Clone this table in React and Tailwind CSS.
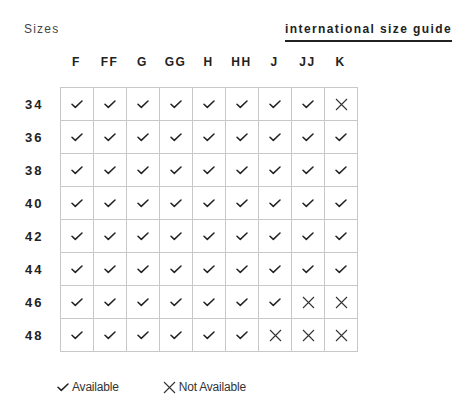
import React from 'react';

const cols = ['F', 'FF', 'G', 'GG', 'H', 'HH', 'J', 'JJ', 'K'];

const rows = [
  { size: '34', na: ['K'] },
  { size: '36', na: [] },
  { size: '38', na: [] },
  { size: '40', na: [] },
  { size: '42', na: [] },
  { size: '44', na: [] },
  { size: '46', na: ['JJ', 'K'] },
  { size: '48', na: ['J', 'JJ', 'K'] },
];

const Check = ({ className = '' }) => (
  <svg width="12" height="9" viewBox="0 0 12 9" className={className}>
    <path d="M1 4.2 L4.3 7.4 L11 1" fill="none" stroke="#222" strokeWidth="1.5" strokeLinecap="round" strokeLinejoin="round" />
  </svg>
);

const Cross = ({ className = '' }) => (
  <svg width="13" height="13" viewBox="0 0 13 13" className={className}>
    <path d="M1 1 L12 12 M12 1 L1 12" fill="none" stroke="#333" strokeWidth="1.1" />
  </svg>
);

const App = () => {
  return (
    <div className="w-[470px] h-[408px] bg-white text-[#222] px-6 pt-[20px]" style={{ fontFamily: '"Liberation Sans", Arial, sans-serif' }}>
      <div className="flex items-start justify-between">
        <span className="text-[12px] leading-[18px] tracking-[1.2px] text-[#444]">Sizes</span>
        <span className="mr-[-6px] text-[12px] leading-[18px] font-bold tracking-[1.4px] text-[#222] border-b-2 border-[#222] pb-[2px]">
          international size guide
        </span>
      </div>

      <div className="flex mt-[8px] pl-[36px] h-[24px] items-center">
        {cols.map((c) => (
          <div key={c} className="w-[33px] text-center text-[12px] font-bold tracking-[1.5px] text-[#222]">
            {c}
          </div>
        ))}
      </div>

      <div className="mt-[13px] flex">
        <div className="w-[36px] flex flex-col pt-px">
          {rows.map((r) => (
            <div key={r.size} className="h-[33px] flex items-center text-[13px] font-bold tracking-[2px] text-[#222] pl-px">
              {r.size}
            </div>
          ))}
        </div>
        <div className="border-l border-t border-[#c8c8c8]">
          {rows.map((r) => (
            <div key={r.size} className="flex">
              {cols.map((c) => (
                <div key={c} className="w-[33px] h-[33px] border-r border-b border-[#c8c8c8] flex items-center justify-center">
                  {r.na.includes(c) ? <Cross /> : <Check />}
                </div>
              ))}
            </div>
          ))}
        </div>
      </div>

      <div className="flex items-center mt-[26px] pl-[33px] text-[12px] text-[#333]">
        <Check className="mr-[3px]" />
        <span className="tracking-[-0.2px]">Available</span>
        <Cross className="ml-[44px] mr-[3px]" />
        <span className="tracking-[-0.2px]">Not Available</span>
      </div>
    </div>
  );
};

export default App;
